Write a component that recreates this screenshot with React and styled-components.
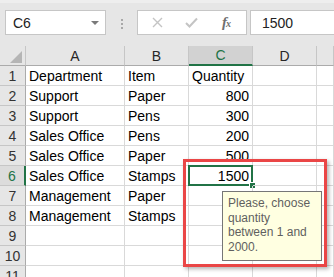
import React from "react";
import styled, { createGlobalStyle } from "styled-components";

const GlobalStyle = createGlobalStyle`
  body {
    margin: 0;
    background: #ffffff;
    font-family: "Liberation Sans", Arial, sans-serif;
  }
`;

const Window = styled.div`
  position: relative;
  width: 334px;
  height: 277px;
  overflow: hidden;
  background: #ffffff;
`;

const FormulaBar = styled.div`
  display: flex;
  align-items: flex-start;
  height: 46px;
  box-sizing: border-box;
  padding: 7px 0 0 5px;
  border-top: 3px solid #eeeeee;
  background: #e6e6e6;
`;

const NameBox = styled.div`
  display: flex;
  align-items: center;
  justify-content: space-between;
  width: 101px;
  height: 25px;
  box-sizing: border-box;
  padding: 0 6px 0 7px;
  background: #ffffff;
  border: 1px solid #c6c6c6;
  font-size: 14px;
  color: #222;
`;

const DropArrow = styled.span`
  width: 0;
  height: 0;
  border-left: 4px solid transparent;
  border-right: 4px solid transparent;
  border-top: 4px solid #7a7a7a;
`;

const Grip = styled.div`
  display: flex;
  flex-direction: column;
  gap: 2px;
  margin: 9px 0 0 15px;
  span {
    width: 2px;
    height: 2px;
    background: #a8a8a8;
  }
`;

const ButtonsBox = styled.div`
  display: flex;
  align-items: center;
  width: 110px;
  height: 25px;
  box-sizing: border-box;
  margin-left: 14px;
  padding-left: 14px;
  gap: 22px;
  background: #ffffff;
  border: 1px solid #c6c6c6;
`;

const Fx = styled.span`
  margin-left: 2px;
  font-family: "Liberation Serif", "Times New Roman", serif;
  font-style: italic;
  font-weight: bold;
  font-size: 15px;
  color: #6f6f6f;
  letter-spacing: -1px;
  small {
    font-size: 10px;
  }
`;

const FormulaInput = styled.div`
  flex: 1;
  display: flex;
  align-items: center;
  height: 25px;
  box-sizing: border-box;
  margin-left: 3px;
  padding-left: 11px;
  background: #ffffff;
  border: 1px solid #c6c6c6;
  border-right: none;
  font-size: 14px;
  color: #222;
`;

const Sheet = styled.div`
  display: grid;
  grid-template-columns: 26px 99px 64px 64px 64px 1fr;
  grid-auto-rows: 20px;
  font-size: 14px;
`;

const Corner = styled.div`
  display: flex;
  align-items: flex-end;
  justify-content: flex-end;
  padding: 0 3px 2px 0;
  background: #e6e6e6;
  border-right: 1px solid #c6c6c6;
  border-bottom: 1px solid #ababab;
`;

const ColHead = styled.div`
  display: flex;
  align-items: center;
  justify-content: center;
  box-sizing: border-box;
  background: ${(p) => (p.$active ? "#d2d2d2" : "#e6e6e6")};
  border-right: 1px solid #c6c6c6;
  border-bottom: ${(p) => (p.$active ? "2px solid #217346" : "1px solid #ababab")};
  color: ${(p) => (p.$active ? "#217346" : "#262626")};
`;

const RowHead = styled.div`
  display: flex;
  align-items: center;
  justify-content: center;
  box-sizing: border-box;
  background: ${(p) => (p.$active ? "#dcdcdc" : "#e6e6e6")};
  border-right: ${(p) => (p.$active ? "2px solid #217346" : "1px solid #ababab")};
  border-bottom: 1px solid #c6c6c6;
  color: ${(p) => (p.$active ? "#217346" : "#333333")};
`;

const Cell = styled.div`
  position: relative;
  display: flex;
  align-items: center;
  justify-content: ${(p) => (p.$num ? "flex-end" : "flex-start")};
  box-sizing: border-box;
  padding: 1px 3px 0 3px;
  border-right: 1px solid #d9d9d9;
  border-bottom: 1px solid #d9d9d9;
  color: #000;
  white-space: nowrap;
  overflow: visible;
`;

const Selection = styled.div`
  position: absolute;
  top: -1px;
  left: -1px;
  right: -1px;
  bottom: -1px;
  border: 2px solid #217346;
  pointer-events: none;
`;

const FillHandle = styled.div`
  position: absolute;
  right: -4px;
  bottom: -4px;
  width: 5px;
  height: 5px;
  background: #217346;
  border-top: 1px solid #fff;
  border-left: 1px solid #fff;
`;

const Callout = styled.div`
  position: absolute;
  left: 183px;
  top: 159px;
  width: 144px;
  height: 108px;
  box-sizing: border-box;
  border: 3px solid #ea4646;
  box-shadow: 2px 2px 4px rgba(0, 0, 0, 0.3);
`;

const Tooltip = styled.div`
  position: absolute;
  left: 222px;
  top: 191px;
  width: 100px;
  height: 70px;
  box-sizing: border-box;
  padding: 4px 4px 0 5px;
  background: #ffffe1;
  border: 1px solid #767676;
  font-size: 12px;
  line-height: 14.6px;
  color: #5f5f5f;
`;

const columns = ["A", "B", "C", "D", ""];

const rows = [
  ["Department", "Item", "Quantity"],
  ["Support", "Paper", 800],
  ["Support", "Pens", 300],
  ["Sales Office", "Pens", 200],
  ["Sales Office", "Paper", 500],
  ["Sales Office", "Stamps", 1500],
  ["Management", "Paper"],
  ["Management", "Stamps"],
  [],
  [],
  [],
];

const CloseIcon = () => (
  <svg width="11" height="11" viewBox="0 0 11 11">
    <path d="M1 1 L10 10 M10 1 L1 10" stroke="#c4c4c4" strokeWidth="1.4" />
  </svg>
);

const CheckIcon = () => (
  <svg width="13" height="11" viewBox="0 0 13 11">
    <path d="M1 6 L4.5 9.5 L12 1.5" stroke="#c4c4c4" strokeWidth="2" fill="none" />
  </svg>
);

const CornerMark = () => (
  <svg width="12" height="12" viewBox="0 0 12 12">
    <polygon points="12,0 12,12 0,12" fill="#b5b5b5" />
  </svg>
);

export default function App() {
  return (
    <Window>
      <GlobalStyle />
      <FormulaBar>
        <NameBox>
          C6
          <DropArrow />
        </NameBox>
        <Grip>
          <span />
          <span />
          <span />
        </Grip>
        <ButtonsBox>
          <CloseIcon />
          <CheckIcon />
          <Fx>
            f<small>x</small>
          </Fx>
        </ButtonsBox>
        <FormulaInput>1500</FormulaInput>
      </FormulaBar>

      <Sheet>
        <Corner>
          <CornerMark />
        </Corner>
        {columns.map((c, i) => (
          <ColHead key={i} $active={c === "C"}>
            {c}
          </ColHead>
        ))}
        {rows.map((r, ri) => (
          <React.Fragment key={ri}>
            <RowHead $active={ri === 5}>{ri + 1}</RowHead>
            {[0, 1, 2, 3, 4].map((ci) => {
              const v = r[ci];
              const selected = ri === 5 && ci === 2;
              return (
                <Cell key={ci} $num={typeof v === "number"}>
                  {v}
                  {selected && (
                    <Selection>
                      <FillHandle />
                    </Selection>
                  )}
                </Cell>
              );
            })}
          </React.Fragment>
        ))}
      </Sheet>

      <Callout />
      <Tooltip>Please, choose quantity between 1 and 2000.</Tooltip>
    </Window>
  );
}
